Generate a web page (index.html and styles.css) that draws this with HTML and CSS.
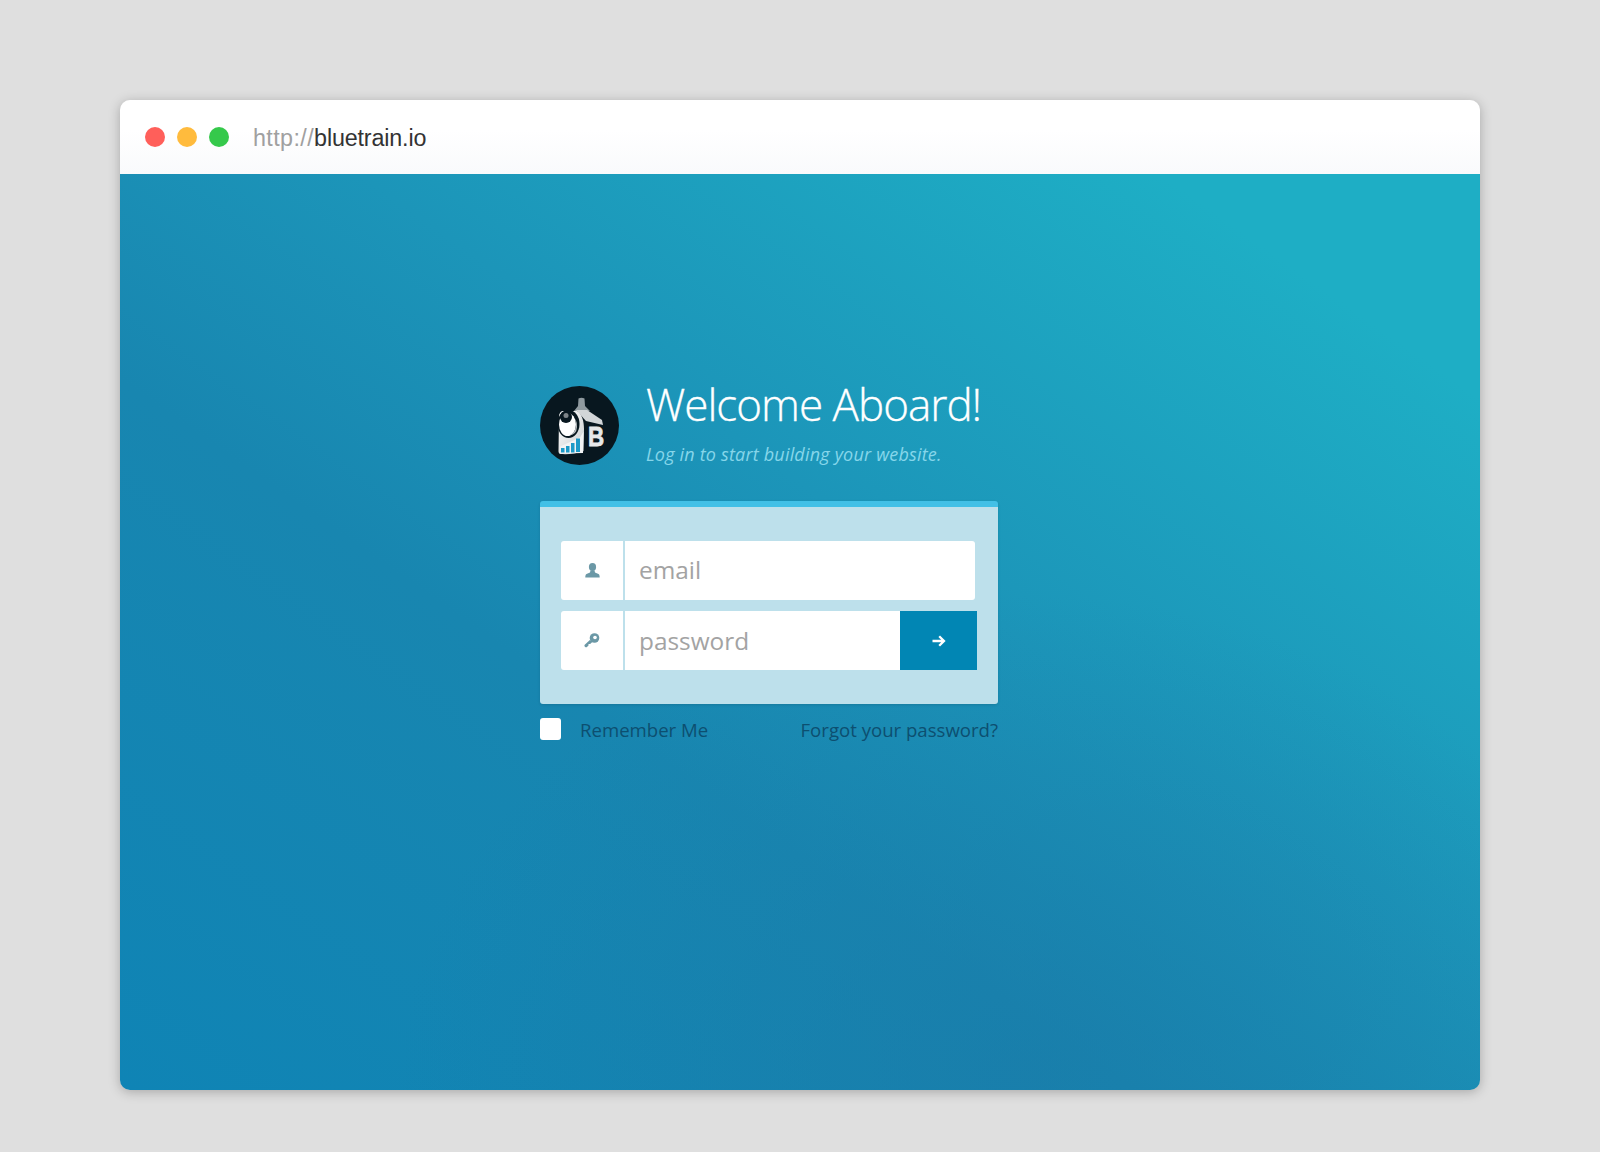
FILE: index.html
```html
<!DOCTYPE html>
<html lang="en">
<head>
<meta charset="utf-8">
<title>Bluetrain</title>
<link rel="stylesheet" href="styles.css">
</head>
<body>
<div class="window">
  <header class="titlebar">
    <div class="lights">
      <span class="light red"></span>
      <span class="light yellow"></span>
      <span class="light green"></span>
    </div>
    <div class="url"><span class="scheme">http://</span>bluetrain.io</div>
  </header>
  <main class="stage">
    <div class="login">
      <div class="brand">
        <svg class="logo" viewBox="0 0 79 79" width="79" height="79" aria-hidden="true">
          <defs>
            <linearGradient id="body" x1="0" y1="0" x2="1" y2="1">
              <stop offset="0" stop-color="#fff"/>
              <stop offset="1" stop-color="#c9cdcf"/>
            </linearGradient>
          </defs>
          <circle cx="39.500" cy="39.500" r="39.500" fill="#08171f"/>
          <path d="M38.500 12.500q3-1.500 6 0l.5 7.500 5 5H34l4-5z" fill="#8f9a9f"/>
          <path d="M36 24h11l15 10 1 5-17-4z" fill="#d2d6d8"/>
          <path d="M23 25h14c5 3 7 10 7 18l-.5 22c-8 3-16 3.500-23 3-1.500 0-2-1.500-2-3L19 31c0-3 1.500-6 4-6z" fill="url(#body)"/>
          <ellipse cx="28.500" cy="38" rx="11" ry="14" fill="#08171f"/>
          <ellipse cx="27.500" cy="38.500" rx="8.500" ry="11.500" fill="#fff"/>
          <path d="M35.500 33q1 8-1 12-2 3-5 4 7 0 7.500-8 0-5-1.500-8z" fill="#b9bec1"/>
          <circle cx="26" cy="31" r="6" fill="#08171f"/>
          <circle cx="26" cy="29.500" r="2.500" fill="#7d8488"/>
          <path d="M20.500 67.500l-.5-7 20-9 3.500-6-.5 21.500z" fill="#f2f3f4"/>
          <path d="M21 62h3.500v4.500H21zM26 60h3.500v6.500H26zM31 57h3.500v9.500H31zM36 52.500h4V66h-4z" fill="#1c9ac8"/>
          <text class="logo-b" x="60" y="60" transform="scale(.8 1)">B</text>
        </svg>
        <div class="brand-text">
          <h1>Welcome Aboard!</h1>
          <p>Log in to start building your website.</p>
        </div>
      </div>
      <form class="card">
        <div class="row">
          <span class="addon">
            <svg viewBox="0 0 15 15" width="15" height="15" aria-hidden="true"><ellipse cx="7.500" cy="4" rx="3.600" ry="4" fill="#6b98a6"/><path d="M5.500 7.500h4L10 9.500l3.500 1.500c1 .5 1.200 2.500 1.200 3.500H.3c0-1 .2-3 1.200-3.500L5 9.500z" fill="#6b98a6"/></svg>
          </span>
          <input class="field" type="text" placeholder="email">
        </div>
        <div class="row">
          <span class="addon">
            <svg viewBox="0 0 16 15" width="16" height="15" aria-hidden="true"><path d="M5.900 7 1 11.500a1.500 1.500 0 0 0 2.200 2.300l1.300-1.200V11h1.700l2.600-2.500z" fill="#6b98a6"/><circle cx="10.500" cy="5" r="4.800" fill="#6b98a6"/><circle cx="11" cy="4.500" r="1.800" fill="#fff"/></svg>
          </span>
          <input class="field joined" type="password" placeholder="password">
          <button class="go" type="button" aria-label="Log in">
            <svg viewBox="0 0 14 12" width="14" height="12" aria-hidden="true"><path d="M.5 6h11.500M7.200 1.200 12 6l-4.800 4.800" fill="none" stroke="#fff" stroke-width="2.300"/></svg>
          </button>
        </div>
      </form>
      <div class="options">
        <label class="remember"><span class="box"></span>Remember Me</label>
        <a class="forgot">Forgot your password?</a>
      </div>
    </div>
  </main>
</div>
</body>
</html>
```
FILE: styles.css
```css
* { box-sizing: border-box; }
html, body { margin: 0; height: 100%; }
body {
  background: #dfdfdf;
  padding: 100px 120px 62px;
  font-family: "Open Sans", sans-serif;
}
.window {
  height: 990px;
  border-radius: 10px;
  overflow: hidden;
  display: flex;
  flex-direction: column;
  box-shadow: 0 2px 12px rgba(0,0,0,.25);
}
.titlebar {
  height: 74px;
  flex: none;
  background: linear-gradient(#fff 40%, #f9fafc);
  display: flex;
  align-items: center;
  padding: 0 25px;
}
.lights { display: flex; gap: 12px; }
.light { width: 20px; height: 20px; border-radius: 50%; }
.red { background: #ff5f5a; }
.yellow { background: #ffbb3d; }
.green { background: #35c94b; }
.url {
  margin: 2px 0 0 24px;
  font-family: "Liberation Sans", sans-serif;
  font-size: 23.300px;
  letter-spacing: -0.15px;
  color: #333;
}
.scheme { color: #a0a0a0; letter-spacing: 0.4px; }
.stage {
  flex: 1;
  display: flex;
  justify-content: center;
  padding: 212px 62px 0 0;
  background:
    radial-gradient(ellipse 620px 480px at 900px 900px, rgba(26,122,168,.6), rgba(26,122,168,0)),
    linear-gradient(215deg, #1eaec5 12%, #1c95b9 42%, #1886b0 62%, #0f84b5 100%);
}
.login { width: 458px; }
.brand { display: flex; gap: 27px; height: 115px; }
.logo { flex: none; }
.logo-b {
  font: 700 28px "Liberation Sans", sans-serif;
  fill: #e6e8e9;
  stroke: #e6e8e9;
  stroke-width: .8px;
}
.brand-text h1 {
  margin: -12px 0 0;
  font-weight: 300;
  font-size: 44px;
  line-height: 60px;
  color: #fff;
  letter-spacing: -1px;
  -webkit-text-stroke: 0.3px #fff;
}
.brand-text p {
  margin: 7px 0 0;
  font-weight: 400;
  font-style: italic;
  font-size: 18px;
  line-height: 26px;
  letter-spacing: 0.19px;
  color: #86d6ea;
}
.card {
  height: 203px;
  background: #bde0eb;
  border-top: 6px solid #42c0e6;
  border-radius: 3px;
  padding: 34px 21px 0;
  display: flex;
  flex-direction: column;
  gap: 11px;
  box-shadow: 0 1px 3px rgba(0,0,0,.12);
}
.row { display: flex; height: 59px; }
.addon {
  width: 62px;
  background: #fff;
  border-radius: 3px 0 0 3px;
  display: flex;
  align-items: center;
  justify-content: center;
  flex: none;
  margin-right: 2px;
}
.field {
  flex: none;
  width: 350px;
  min-width: 0;
  border: 0;
  background: #fff;
  border-radius: 0 3px 3px 0;
  padding: 0 14px 3px;
  font: 400 24.400px "Open Sans", sans-serif;
  color: #555;
  outline: none;
}
.field::placeholder { color: #a3a3a3; opacity: 1; }
.field.joined { width: 275px; border-radius: 0; padding-bottom: 1px; }
.go {
  flex: none;
  width: 77px;
  border: 0;
  padding: 0;
  background: #0186b4;
  display: flex;
  align-items: center;
  justify-content: center;
}
.options {
  display: flex;
  justify-content: space-between;
  align-items: center;
  margin-top: 14px;
  height: 22px;
  font-size: 18.600px;
  color: #0d4f70;
}
.remember { display: flex; align-items: center; gap: 19px; }
.box { width: 21px; height: 22px; background: #fff; border-radius: 3px; }
```
